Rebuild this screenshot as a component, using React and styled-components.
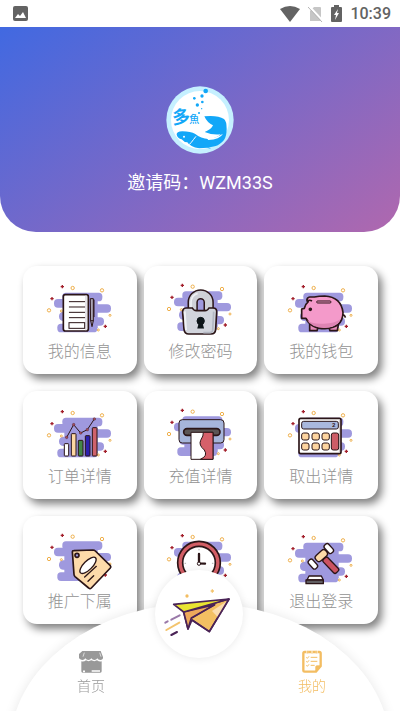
// External Dependencies
import React from 'react';
import styled, { createGlobalStyle } from 'styled-components';

// Local Variables
const ink = '#2b1517';
const lilac = '#9f99de';
const plum = '#4a2356';

const GlobalStyle = createGlobalStyle`
  * {
    box-sizing: border-box;
  }

  body {
    background: #fff;
    font-family: Roboto, "Noto Sans CJK SC", sans-serif;
    margin: 0;
    overflow-x: hidden;
  }

  button {
    background: none;
    border: 0;
    font: inherit;
    padding: 0;
  }
`;

const Page = styled.div`
  min-height: 100vh;
  padding-bottom: 88px;
`;
const StatusBar = styled.div`
  align-items: center;
  color: #636363;
  display: flex;
  gap: 8px;
  height: 27px;
  padding: 0 9px 0 13px;
`;
const Spacer = styled.div`
  flex: 1;
`;
const Time = styled.time`
  font-size: 16px;
  font-weight: 500;
  line-height: 27px;
`;
const Header = styled.header`
  align-items: center;
  background: linear-gradient(145deg, #4169e1, #b068ae);
  border-radius: 0 0 36px 36px;
  display: flex;
  flex-direction: column;
  gap: 17px;
  padding: 59px 16px 37px;
`;
const InviteCode = styled.p`
  color: #fff;
  font-size: 18px;
  line-height: 24px;
  margin: 0;
`;
const Grid = styled.main`
  display: grid;
  gap: 17px 7px;
  grid-template-columns: repeat(3, 1fr);
  padding: 34px 22px 0 23px;
`;
const Card = styled.button`
  align-items: center;
  background: #fff;
  border-radius: 14px;
  box-shadow: 4px 5px 9px #808080;
  display: flex;
  flex-direction: column;
  gap: 3px;
  height: 108px;
  justify-content: flex-start;
  padding-top: 16px;
`;
const CardIcon = styled.svg`
  height: 55px;
  overflow: visible;
  width: 70px;
`;
const CardLabel = styled.span`
  color: #939393;
  font-size: 16px;
  font-weight: 300;
  line-height: 24px;
`;
const TabBar = styled.nav`
  background: #fff;
  border-radius: 50% 50% 0 0 / 100% 100% 0 0;
  bottom: -36px;
  box-shadow: 0 0 12px #00000018;
  display: flex;
  height: 144px;
  justify-content: space-between;
  left: 10px;
  padding: 47px 45px 0 48px;
  position: fixed;
  right: 10px;
`;
const Tab = styled.button`
  align-items: center;
  color: ${props => (props.$active ? '#f3bd62' : '#999')};
  display: flex;
  flex-direction: column;
  gap: 3px;
  height: 48px;
  width: 66px;
`;
const TabLabel = styled.span`
  font-size: 14px;
  font-weight: 300;
  line-height: 20px;
`;
const PlaneButton = styled.button`
  background: #fff;
  border-radius: 50%;
  bottom: 53px;
  box-shadow: 0 0 8px #00000018;
  height: 88px;
  left: calc(50% - 45px);
  position: fixed;
  width: 88px;
`;

const Plus = ({ x, y }) => (
  <path d={`M${x - 5} ${y}h10M${x} ${y - 5}v10`} stroke="#a3202c" strokeWidth="4" />
);

const Backdrop = ({ lift = 0 }) => (
  <g transform={`translate(0 ${-lift})`}>
    <g fill={lilac}>
      <rect x="142" y="112" width="120" height="26" rx="11" />
      <rect x="117" y="131" width="120" height="26" rx="12" />
      <rect x="180" y="147" width="108" height="25" rx="12" />
      <rect x="132" y="169" width="110" height="28" rx="13" />
      <rect x="180" y="186" width="87" height="25" rx="12" />
      <rect x="127" y="205" width="120" height="26" rx="11" />
      <path d="M148 128h100v90H148z" />
    </g>
    <Plus x={142} y={94} />
    <Plus x={111} y={130} />
    <Plus x={271} y={213} />
    <g fill="none" stroke="#efb04c" strokeWidth="3">
      <circle cx="173" cy="98" r="5" />
      <circle cx="261" cy="105" r="5" />
      <circle cx="102" cy="165" r="5" />
      <circle cx="285" cy="180" r="3" />
      <circle cx="250" cy="224" r="3" />
      <circle cx="139" cy="167" r="3" />
    </g>
  </g>
);

const NotesArt = () => (
  <g stroke={ink} strokeWidth="4" strokeLinecap="round">
    <rect x="145" y="118" width="75" height="109" rx="6" fill="#fff" strokeWidth="5" />
    <path d="M213 122v101" stroke="#d9d6de" />
    <path d="M163 139h46M163 155h46M163 171h46M163 187h46" strokeWidth="3" />
    <rect x="162" y="202" width="47" height="17" fill="#fff" strokeWidth="3" />
    <path d="M227 130h8v66l-4 18-4-18z" fill="#aaa5b5" strokeWidth="3" />
    <path d="M237 134v50M227 196h8" strokeWidth="3" />
  </g>
);

const LockArt = () => (
  <g stroke={ink} strokeWidth="5">
    <path d="M173 170V141a24 24 0 0 1 48 0v29" fill="none" strokeWidth="31" />
    <path d="M173 170V141a24 24 0 0 1 48 0v29" fill="none" stroke="#cfd1d7" strokeWidth="22" />
    <path d="M168 157v-16a29 29 0 0 1 20-27" fill="none" stroke="#eff0f4" strokeWidth="5" />
    <path d="M153 158h19q4 8 12 8h26q8 0 12-8h12q13 0 11 14l-3 50q-1 14-14 14h-67q-12 0-14-14l-4-50q-1-14 10-14z" fill="#d1d4dc" />
    <path d="M149 168l4 56" stroke="#f0f2f6" strokeWidth="6" />
    <path d="M236 169l-3 56q0 6-8 7h-20" fill="none" stroke="#b3b7c2" strokeWidth="5" />
    <circle cx="197" cy="197" r="11" fill="#0c1418" stroke="#0c1418" strokeWidth="3" />
    <path d="M194 203l-4 14h14l-4-14z" fill="#0c1418" stroke="#0c1418" />
  </g>
);

const PiggyArt = () => (
  <g fill="#f49aca" stroke={ink} strokeWidth="5" strokeLinejoin="round">
    <path d="M161 206v20h22l4-12M218 214l4 12h22l4-24" fill="#e48ab9" />
    <path d="M257 179q10-2 11 8" fill="none" />
    <path d="M153 134q0-8 8-9h14q14-3 31-3 50 3 55 50-1 45-54 48-43 0-57-31h-13v-28l8-2q3-13 12-20-5 0-4-5z" />
    <path d="M153 195q14 12 51 10 32 0 50-14-13 26-50 27-37-1-51-23z" fill="#de84b3" stroke="none" />
    <rect x="182" y="137" width="43" height="6" rx="3" strokeWidth="3" />
    <circle cx="163" cy="162" r="3" fill={ink} />
    <path d="M154 136q8-3 14 1" fill="none" />
  </g>
);

const ChartArt = () => (
  <g stroke={ink} strokeWidth="3">
    <rect x="148" y="190" width="13" height="37" rx="2" fill="#fff" />
    <rect x="169" y="160" width="14" height="67" rx="2" fill="#fdd7a2" />
    <rect x="190" y="180" width="14" height="47" rx="2" fill="#438646" />
    <rect x="211" y="166" width="14" height="61" rx="2" fill="#2d20ae" />
    <rect x="232" y="142" width="14" height="85" rx="2" fill="#cf626b" />
    <path d="M155 171l21-38 21 25 20-10 21-32" fill="none" />
    <g fill="#a54b5c" strokeWidth="1">
      <circle cx="155" cy="171" r="4" />
      <circle cx="176" cy="133" r="4" />
      <circle cx="197" cy="158" r="4" />
      <circle cx="217" cy="148" r="4" />
      <circle cx="238" cy="116" r="4" />
    </g>
  </g>
);

const ReceiptArt = () => (
  <g stroke={ink} strokeWidth="3">
    <rect x="132" y="118" width="135" height="70" rx="10" fill="#a6b5db" />
    <rect x="146" y="145" width="109" height="20" rx="10" fill="#5b5555" strokeWidth="5" />
    <path d="M168 156h66v81h-66z" fill="#fff" />
    <path d="M205 156h29v81h-38q24-10 12-28-18-15-11-29 9-14 8-24z" fill="#d5606a" />
  </g>
);

const CalculatorArt = () => (
  <g stroke={ink} strokeWidth="4">
    <rect x="129" y="114" width="126" height="106" rx="5" fill="#fff" strokeWidth="5" />
    <path d="M250 118v98" stroke="#c9c0be" strokeWidth="3" />
    <rect x="137" y="123" width="110" height="23" rx="6" fill="#a9b8dd" strokeWidth="3" />
    <text x="228" y="141" fill={ink} fontSize="18" fontWeight="700" stroke="none">2</text>
    <g fill="#fdd5a0" strokeWidth="3">
      <rect x="137" y="158" width="22" height="21" rx="6" />
      <rect x="168" y="158" width="22" height="21" rx="6" />
      <rect x="198" y="158" width="22" height="21" rx="6" />
      <rect x="137" y="188" width="22" height="21" rx="6" />
      <rect x="168" y="188" width="22" height="21" rx="6" />
      <rect x="198" y="188" width="22" height="21" rx="6" />
    </g>
    <rect x="226" y="158" width="22" height="51" rx="6" fill="#cd5d67" strokeWidth="3" />
  </g>
);

const TagArt = () => (
  <g stroke={ink} strokeWidth="5" strokeLinecap="round" strokeLinejoin="round">
    <path d="M172 139q0-3 4-3l58-2q4 0 7 3l45 44q3 4 0 7l-57 60q-4 4-8 0l-41-34q-3-3-3-7z" fill="#fddaaa" />
    <circle cx="186" cy="150" r="6" fill={lilac} />
    <ellipse cx="219" cy="180" rx="32" ry="13" transform="rotate(-45 219 180)" fill="#fff" strokeWidth="4" />
    <path d="M209 215l35-32M219 228l17-17" strokeWidth="4" />
  </g>
);

const ClockArt = () => (
  <g stroke={ink} strokeWidth="5" strokeLinecap="round">
    <circle cx="192" cy="172" r="64" fill="#d25e65" />
    <circle cx="192" cy="172" r="49" fill="#fff" />
    <path d="M192 174v-28M192 174l18 1" strokeWidth="7" />
    <circle cx="192" cy="175" r="5" fill="#fff" strokeWidth="3" />
    <path d="M192 132v2M150 174h2M232 174h2" stroke="#888" strokeWidth="2" />
  </g>
);

const GavelArt = () => (
  <g stroke={ink} strokeWidth="4" strokeLinejoin="round">
    <rect x="196" y="170" width="56" height="19" rx="6" fill="#cb5361" transform="rotate(46 224 180)" />
    <rect x="176" y="140" width="40" height="22" rx="9" fill="#fddaa8" transform="rotate(-42 196 151)" />
    <rect x="210" y="114" width="17" height="32" rx="7" fill="#fff" transform="rotate(-42 218 130)" />
    <rect x="162" y="160" width="17" height="32" rx="7" fill="#fff" transform="rotate(-42 171 176)" />
    <path d="M153 224l6-12h37l6 12z" fill="#fff" />
    <path d="M150 224h52v11h-52z" fill="#605d61" />
  </g>
);

const cards = [
  { label: '我的信息', Art: NotesArt },
  { label: '修改密码', Art: LockArt, lift: 4 },
  { label: '我的钱包', Art: PiggyArt },
  { label: '订单详情', Art: ChartArt },
  { label: '充值详情', Art: ReceiptArt, lift: 4 },
  { label: '取出详情', Art: CalculatorArt },
  { label: '推广下属', Art: TagArt, lift: 4 },
  { Art: ClockArt, lift: 3 },
  { label: '退出登录', Art: GavelArt },
];

const Logo = () => (
  <svg width="68" height="68" viewBox="0 0 204 204">
    <circle cx="102" cy="102" r="101" fill="#c5f0ff" />
    <circle cx="102" cy="102" r="87" fill="#fff" />
    <g fill="#12a7f8">
      <circle cx="119" cy="15" r="7" />
      <circle cx="108" cy="30" r="5" />
      <circle cx="85" cy="37" r="4" />
      <circle cx="109" cy="48" r="4" />
      <circle cx="94" cy="57" r="5" />
      <circle cx="107" cy="68" r="2" />
      <circle cx="99" cy="81" r="3" />
      <path d="M115 91q40-4 59 8 8 6 8 30 0 22-8 33-12 15-28 19-20 6-46 6-28-4-36-18-10 0-17-9-12-3-15-14-1-9 17-10 25 0 39 8 16 14 40 15 22-1 36-14-24 3-48-7 20-8 25-20-18-8-26-27z" />
      <path d="M122 184q8 0 13 4-8 0-13-4z" />
      <text x="18" y="112" fontSize="54" fontWeight="700" transform="rotate(-6 44 92)">多</text>
      <text x="70" y="112" fontSize="30" fontWeight="500">魚</text>
    </g>
    <path d="M90 151q-8 10-14 18-5 8-12 8" fill="none" stroke="#fff" strokeWidth="3" />
    <path d="M121 155q26 4 50-12-10 18-44 19" fill="#fff" />
    <circle cx="54" cy="152" r="3" fill="#fff" />
  </svg>
);

const PlaneIcon = () => (
  <svg width="88" height="88" viewBox="51 194 264 264">
    <g stroke={plum} strokeWidth="5" strokeLinejoin="round">
      <path d="M137 320l136-39-59 98-52-35-12 27z" fill="#f3bf62" />
      <path d="M137 320l93-22-70 40-10 33z" fill="#eea95b" />
      <path d="M107 297l166-16-136 39z" fill="#e9e432" />
      <path d="M271 285l-49 32 19 20z" fill="#fbdcae" stroke="none" />
      <path d="M162 338l68-40" fill="none" strokeWidth="4" />
      <path d="M273 281l-59 98-52-35" fill="none" />
    </g>
    <g strokeWidth="6" strokeLinecap="round">
      <path d="M82 352l7-4M100 343l25-13" stroke="#9a79a9" />
      <path d="M85 374l39-22" stroke="#f3c46e" />
      <path d="M100 389l17-9" stroke={plum} />
    </g>
    <circle cx="147" cy="272" r="5" fill="#f3bd62" />
    <path d="M218 257h10M223 252v10" stroke="#f3c46e" strokeWidth="4" />
  </svg>
);

const ShopIcon = () => (
  <svg width="25" height="23" viewBox="0 0 75 69" fill="currentColor">
    <path d="M10 3h55l7 18q1 9-8 9-7 0-9-5-3 5-9 5t-9-5q-3 5-9 5t-9-5q-3 5-9 5t-9-5q-2 5-8 4-4-1-2-9z" />
    <path d="M7 34q8 2 14-3 7 5 16 0 9 5 17 0 7 5 14 3v30q0 4-4 4H11q-4 0-4-4z" />
    <path d="M16 8l-4 12M62 8l4 12" stroke="#fff" strokeWidth="2" />
    <path d="M12 64h6M38 63h25" stroke="#fff" strokeWidth="5" />
  </svg>
);

const ListIcon = () => (
  <svg width="20" height="23" viewBox="0 0 60 69" fill="none" stroke="currentColor">
    <path d="M8 6h44q4 0 4 4v38L42 65H8q-4 0-4-4V10q0-4 4-4z" strokeWidth="7" />
    <path d="M16 0v9M30 0v9M44 0v9" stroke="#fff" strokeWidth="5" />
    <path d="M17 2v8M30 2v8M43 2v8" strokeWidth="3" />
    <path d="M13 22l3 3 5-6M13 34l3 3 5-6M13 46l3 3 5-6M26 22h20M26 34h20M26 46h12" strokeWidth="3" />
    <path d="M56 47L41 65V51q0-4 4-4z" fill="currentColor" strokeWidth="2" />
  </svg>
);

const StatusIcons = () => (
  <>
    <svg width="20" height="16" viewBox="0 0 20 16">
      <path d="M0 3q10-6 20 0L10 16z" fill="currentColor" />
    </svg>
    <svg width="15" height="16" viewBox="0 0 15 16">
      <path d="M6 1h6q1 0 1 1v13H2V5z" fill="#c6c6c6" />
      <path d="M1 0l14 15" stroke="#fff" strokeWidth="2" />
      <path d="M0 1l14 15" stroke="#b5b5b5" />
    </svg>
    <svg width="11" height="18" viewBox="0 0 11 18">
      <path d="M3 0h5v2h2q1 0 1 1v13q0 1-1 1H1q-1 0-1-1V3q0-1 1-1h2z" fill="currentColor" />
      <path d="M7 4l-4 6h2l-1 5 4-7H6z" fill="#fff" />
    </svg>
  </>
);

const App = () => (
  <Page>
    <GlobalStyle />
    <StatusBar>
      <svg width="15" height="15" viewBox="0 0 15 15">
        <rect width="15" height="15" rx="2" fill="currentColor" />
        <path d="M2 12l3-4 2 2 3-4 3 6z" fill="#fff" />
      </svg>
      <Spacer />
      <StatusIcons />
      <Time>10:39</Time>
    </StatusBar>
    <Header>
      <Logo />
      <InviteCode>邀请码：WZM33S</InviteCode>
    </Header>
    <Grid>
      {cards.map(({ label, Art, lift }) => (
        <Card key={label || 'clock'} type="button">
          <CardIcon viewBox="90 80 210 165">
            <Backdrop lift={lift} />
            <Art />
          </CardIcon>
          {label && <CardLabel>{label}</CardLabel>}
        </Card>
      ))}
    </Grid>
    <TabBar>
      <Tab type="button">
        <ShopIcon />
        <TabLabel>首页</TabLabel>
      </Tab>
      <Tab type="button" $active>
        <ListIcon />
        <TabLabel>我的</TabLabel>
      </Tab>
    </TabBar>
    <PlaneButton type="button">
      <PlaneIcon />
    </PlaneButton>
  </Page>
);

export default App;
